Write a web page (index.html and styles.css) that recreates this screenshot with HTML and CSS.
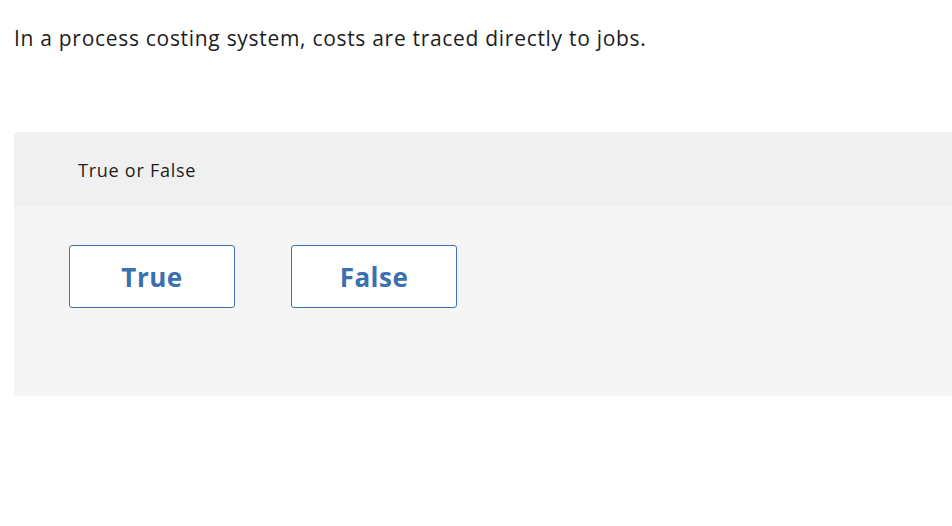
FILE: index.html
```html
<!DOCTYPE html>
<html lang="en">
<head>
<meta charset="utf-8">
<title>True or False</title>
<link rel="stylesheet" href="styles.css">
</head>
<body>
<main class="page">
  <p class="question">In a process costing system, costs are traced directly to jobs.</p>
  <section class="panel">
    <div class="panel-head">True or False</div>
    <div class="panel-body">
      <button class="choice" type="button">True</button>
      <button class="choice" type="button">False</button>
    </div>
  </section>
</main>
</body>
</html>
```
FILE: styles.css
```css
html, body {
  margin: 0;
  padding: 0;
  background: #ffffff;
  overflow: hidden;
}
body {
  font-family: "Open Sans", "Liberation Sans", sans-serif;
  color: #1a1a1a;
}
.page {
  padding: 0 0 0 14px;
}
.question {
  margin: 0;
  padding-top: 24px;
  font-size: 21px;
  line-height: 28px;
  letter-spacing: 0.7px;
  color: #1d1d1d;
}
.panel {
  margin-top: 80px;
  width: 960px;
  border-radius: 4px;
  overflow: hidden;
}
.panel-head {
  background: #f0f0f0;
  height: 75px;
  box-sizing: border-box;
  padding-left: 64px;
  display: flex;
  align-items: center;
  font-size: 18px;
  letter-spacing: 0.75px;
  color: #1d1d1d;
}
.panel-body {
  background: #f5f5f5;
  height: 189px;
  box-sizing: border-box;
  padding: 38px 0 0 55px;
  display: flex;
  align-items: flex-start;
  gap: 56px;
}
.choice {
  width: 166px;
  height: 63px;
  background: #ffffff;
  border: 1px solid #3d72b6;
  border-radius: 3px;
  font-family: inherit;
  font-size: 26px;
  font-weight: 700;
  letter-spacing: 0.5px;
  color: #3a70b2;
  padding: 0;
  cursor: pointer;
}
```
